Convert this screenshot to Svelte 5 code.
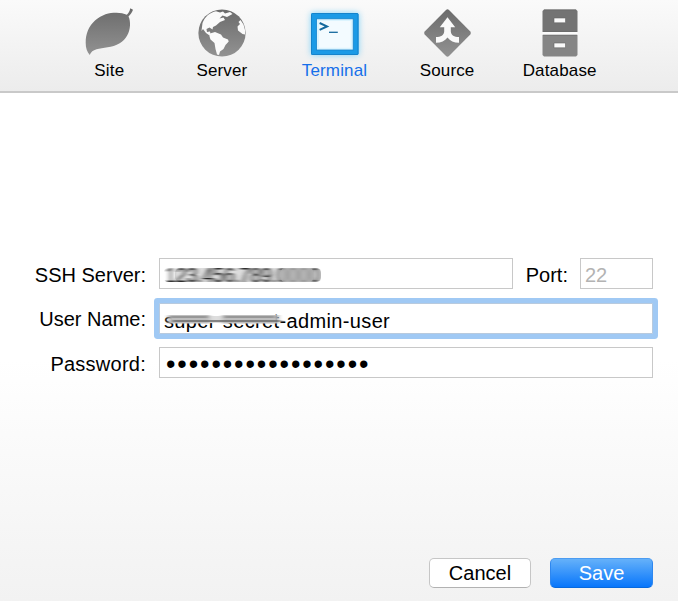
<script lang="ts">
  let activeTab = $state('Terminal');
  let server = $state('');
  let port = $state('');
  let userName = $state('super-secret-admin-user');

  const tabs = ['Site', 'Server', 'Terminal', 'Source', 'Database'];
  const password = '•'.repeat(18);
</script>

<div class="window">
  <nav class="toolbar">
    {#each tabs as tab}
      <button class="tab" class:active={tab === activeTab} onclick={() => (activeTab = tab)}>
        <svg class="icon" width="60" height="57" viewBox="0 0 60 57" aria-hidden="true">
          <defs>
            <linearGradient id="metal-{tab}" x1="0" y1="0" x2="0" y2="1">
              <stop offset="0" stop-color="#6b6b6b" />
              <stop offset="1" stop-color="#929292" />
            </linearGradient>
          </defs>
          {#if tab === 'Site'}
            <path
              d="M10.7 55 C8.2 52 6.6 48 6.7 43 C6.5 34 10 26 16 20.6 C23 14.5 30 12.8 37.4 12.8 C41.5 12.8 45 13.5 47.8 14.8 C49.5 13.2 50.8 11 51.3 8.2 L54 9.7 C53 12.5 51.4 14.7 49.5 16.4 C50.6 18.5 51.2 22 51 25.5 C50.5 33 47 39.5 40.7 43.3 C33 48 24 47.5 17.5 49.3 C14 50.3 12 52 10.7 55 Z"
              fill="url(#metal-Site)"
            />
          {:else if tab === 'Server'}
            <circle cx="30" cy="33" r="23.6" fill="url(#metal-Server)" />
            <path
              d="M10.5 23 C13 16.5 18 12.5 24 11.3 L28 12.5 L31 11.5 L33 13.5 L38 12 L40.5 14 L35 17 L30.5 15.5 L27.5 18.5 L31.5 17.5 L33 20 L28 22 L24 25.5 L21 27 L20.5 29.5 L17.5 27.5 L14.5 29 L15 32 L18 31.5 L18.5 34 L21 35.5 L19 36.5 L14 33 L11 29 L9.5 31 Z"
              fill="#fafafa"
            />
            <path
              d="M18 33.5 L23 32 L29 34.5 L31 37.5 L36 39.5 L36.7 41.5 L33.5 45 L31.5 49 L28 51.5 L27 55 L25 54.5 L23.5 49 L22.5 43 L18.5 39.5 L17.5 36.5 Z"
              fill="#fafafa"
            />
            <path
              d="M48.5 20 L51.5 24.5 L53 30 L53 34.5 L50.5 34 L46 30.5 L45.5 26.5 L48 24 L46.5 22 Z"
              fill="#fafafa"
            />
          {:else if tab === 'Terminal'}
            <g class="glow">
              <rect x="7" y="13" width="47.5" height="42" rx="1.5" fill="#1b9ae6" />
              <rect x="7.5" y="13.5" width="46.5" height="41" rx="1" fill="none" stroke="#1683cb" />
              <rect x="12.5" y="18.8" width="36.7" height="31.2" fill="#dcf4fe" stroke="#1683cb" stroke-width=".8" />
              <rect x="15" y="21" width="31.7" height="26.8" fill="#f3fbff" />
            </g>
            <path d="M15.6 23 L23 26.4 L15.6 29.8" fill="none" stroke="#14699d" stroke-width="2" />
            <path d="M25 32.3 H33.8" stroke="#14699d" stroke-width="1.3" />
          {:else if tab === 'Source'}
            <path
              d="M29 10 Q30.5 8.5 32 10 L53.3 31.6 Q54.5 33 53.3 34.4 L32 56 Q30.5 57.4 29 56 L7.7 34.4 Q6.5 33 7.7 31.6 Z"
              fill="url(#metal-Source)"
            />
            <path
              d="M30.5 17.3 L38.2 27.3 H33.8 V31.5 C34.3 35.5 37 37 42 37 V42.8 C37 42.8 33 41 30.5 37.5 C28 41 24 42.8 19 42.8 V37 C24 37 26.7 35.5 27.2 31.5 V27.3 H22.8 Z"
              fill="#fafafa"
            />
          {:else}
            <path d="M14 9.5 H46 L47.5 11 V32 H12.5 V11 Z" fill="#737373" />
            <path d="M12.5 34.7 H47.5 V55 L46 56.5 H14 L12.5 55 Z" fill="#858585" />
            <path d="M12.5 32 H47.5 V34.7 H12.5 Z" fill="#fafafa" />
            <path d="M14 10 H46 M13 31.5 H47 M13 35.2 H47" stroke="#686868" stroke-width=".7" />
            <path d="M24 18 H35.5 V22.8 H24 Z M24 43 H35.5 V47.8 H24 Z" fill="#fafafa" stroke="#666" stroke-width=".6" />
          {/if}
        </svg>
        <span>{tab}</span>
      </button>
    {/each}
  </nav>

  <main class="form">
    <div class="row">
      <label for="server">SSH Server:</label>
      <div class="field">
        <input id="server" bind:value={server} />
        <svg class="smudge" width="170" height="29" viewBox="0 0 170 29">
          <defs>
            <filter id="smear-server" x="-5%" y="-10%" width="110%" height="120%">
              <feGaussianBlur stdDeviation="2.8 0.3" />
            </filter>
            <clipPath id="server-band"><rect x="4" y="9" width="157" height="14" rx="4" /></clipPath>
          </defs>
          <g clip-path="url(#server-band)">
            <rect x="15" y="9" width="146" height="14" rx="5" fill="#dcdcdc" />
            <text x="5" y="23" textLength="155" opacity=".85" filter="url(#smear-server)">123.456.789.0000</text>
            <rect x="121" y="9" width="32" height="14" rx="4" fill="#b0b0b0" opacity=".75" />
          </g>
        </svg>
      </div>
      <label class="port-label" for="port">Port:</label>
      <div class="field port"><input id="port" placeholder="22" bind:value={port} /></div>
    </div>

    <div class="row">
      <label for="user">User Name:</label>
      <div class="field focused">
        <input id="user" class="user" bind:value={userName} />
        <svg class="smudge" width="130" height="29" viewBox="0 0 130 29">
          <defs>
            <filter id="smear-user" x="-5%" y="-20%" width="110%" height="140%">
              <feGaussianBlur stdDeviation="2 0.4" />
            </filter>
          </defs>
          <g filter="url(#smear-user)">
            <path d="M8 11 H50 V19.5 H8 Z M62 11 H119 V19.5 H62 Z" fill="#bebebe" />
            <path d="M50 12 H62 V19 H50 Z" fill="#dedede" />
            <path d="M9 13 H48 M64 13 H115" stroke="#8a8a8a" stroke-width="1.3" />
            <path d="M12 17 H121" stroke="#666" stroke-width="1.6" />
          </g>
        </svg>
      </div>
    </div>

    <div class="row">
      <label for="password">Password:</label>
      <div class="field"><input id="password" class="password" value={password} /></div>
    </div>
  </main>

  <footer class="actions">
    <button class="action">Cancel</button>
    <button class="action primary">Save</button>
  </footer>
</div>

<style>
  :global(body) {
    margin: 0;
  }

  .window {
    display: flex;
    flex-direction: column;
    box-sizing: border-box;
    width: 678px;
    height: 601px;
    overflow: hidden;
    color: #000;
    font-family: 'Liberation Sans', Arial, sans-serif;
    font-size: 20px;
    background: linear-gradient(#fff 60%, #f2f2f2 100%);
  }

  .toolbar {
    display: flex;
    flex: none;
    box-sizing: border-box;
    height: 93px;
    padding-left: 53px;
    background: linear-gradient(#fafafa, #ececec);
    border-bottom: 2px solid #c9c9c9;
  }

  .tab {
    display: flex;
    flex-direction: column;
    align-items: center;
    width: 112.6px;
    padding: 0;
    border: 0;
    background: none;
    color: #000;
    font: 17px/20px 'Liberation Sans', Arial, sans-serif;
    letter-spacing: 0.15px;
  }

  .tab.active {
    color: #166fea;
  }

  .icon {
    flex: none;
    display: block;
    margin-bottom: 4px;
    overflow: visible;
  }

  .glow {
    filter: drop-shadow(0 0 3px #7fd2f8);
  }

  .form {
    display: flex;
    flex: 1;
    flex-direction: column;
    gap: 13px;
    padding: 165px 25px 0 0;
  }

  .row {
    display: flex;
    align-items: center;
    height: 31.5px;
  }

  label {
    width: 146px;
    margin-right: 13px;
    padding-top: 3px;
    text-align: right;
    white-space: nowrap;
  }

  label[for='password'] {
    letter-spacing: 0.25px;
  }

  .port-label {
    width: 55px;
    margin-right: 12px;
  }

  .field {
    position: relative;
    flex: 1;
    box-sizing: border-box;
    height: 31px;
    border: 1px solid #c8c8c8;
    background: #fff;
  }

  .field.port {
    flex: none;
    width: 73px;
  }

  .focused {
    border-color: #b8cade;
    box-shadow: 0 0 0 5px #a0c9f4;
    border-radius: 1px;
  }

  input {
    display: block;
    box-sizing: border-box;
    width: 100%;
    height: 29px;
    padding: 3px 4px 0;
    border: 0;
    outline: 0;
    background: none;
    color: #000;
    font: inherit;
  }

  input::placeholder {
    color: #b3b3b3;
  }

  .user {
    padding-top: 6px;
    letter-spacing: 0.36px;
  }

  .password {
    padding: 4px 6px 0;
    font-size: 27px;
    letter-spacing: 1.9px;
  }

  .smudge {
    position: absolute;
    top: 0;
    left: 0;
    pointer-events: none;
  }

  .actions {
    display: flex;
    justify-content: flex-end;
    gap: 19px;
    padding: 0 25px 13px 0;
  }

  .action {
    width: 102px;
    height: 30px;
    padding: 0;
    border: 1px solid #c6c6c6;
    border-bottom-color: #b2b2b2;
    border-radius: 5px;
    background: #fff;
    color: #000;
    font: inherit;
  }

  .action.primary {
    width: 103px;
    border-color: #4c9cf1 #2e87ef #0869dd;
    background: linear-gradient(#65b1fa, #0876fb);
    color: #fff;
  }
</style>
